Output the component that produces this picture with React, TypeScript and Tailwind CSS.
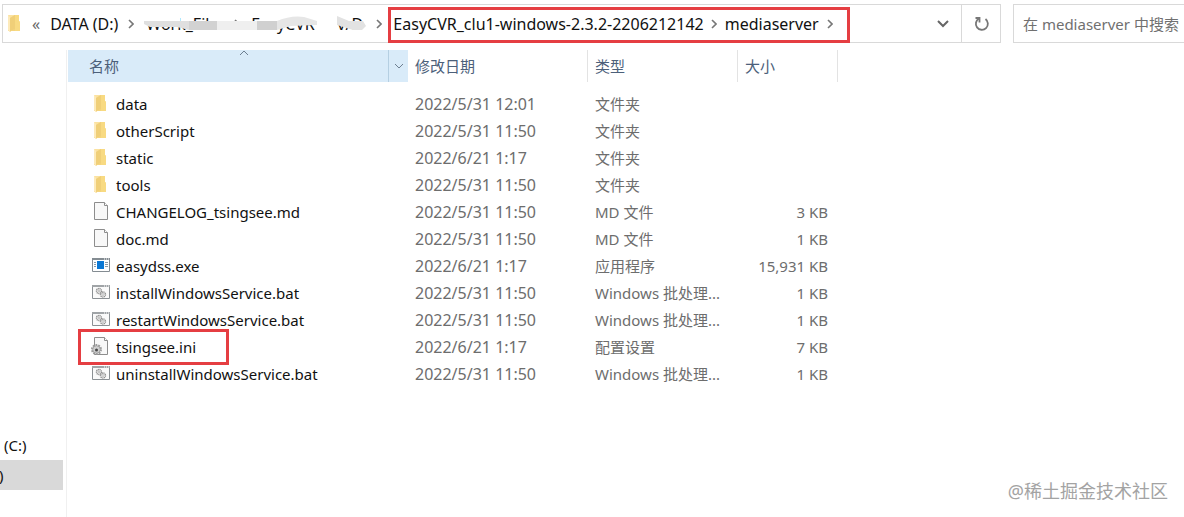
import { useState } from "react";

type FileKind = "folder" | "doc" | "exe" | "bat" | "ini";

interface FileEntry {
  name: string;
  kind: FileKind;
  modified: string;
  type: string;
  size?: string;
  marked?: boolean;
}

const files: FileEntry[] = [
  { name: "data", kind: "folder", modified: "2022/5/31 12:01", type: "文件夹" },
  { name: "otherScript", kind: "folder", modified: "2022/5/31 11:50", type: "文件夹" },
  { name: "static", kind: "folder", modified: "2022/6/21 1:17", type: "文件夹" },
  { name: "tools", kind: "folder", modified: "2022/5/31 11:50", type: "文件夹" },
  { name: "CHANGELOG_tsingsee.md", kind: "doc", modified: "2022/5/31 11:50", type: "MD 文件", size: "3 KB" },
  { name: "doc.md", kind: "doc", modified: "2022/5/31 11:50", type: "MD 文件", size: "1 KB" },
  { name: "easydss.exe", kind: "exe", modified: "2022/6/21 1:17", type: "应用程序", size: "15,931 KB" },
  { name: "installWindowsService.bat", kind: "bat", modified: "2022/5/31 11:50", type: "Windows 批处理...", size: "1 KB" },
  { name: "restartWindowsService.bat", kind: "bat", modified: "2022/5/31 11:50", type: "Windows 批处理...", size: "1 KB" },
  { name: "tsingsee.ini", kind: "ini", modified: "2022/6/21 1:17", type: "配置设置", size: "7 KB", marked: true },
  { name: "uninstallWindowsService.bat", kind: "bat", modified: "2022/5/31 11:50", type: "Windows 批处理...", size: "1 KB" },
];

function FolderIcon() {
  return (
    <svg width="20" height="20" viewBox="0 0 20 20" aria-hidden="true" className="shrink-0">
      <path d="M4 1h11v6l1 1v9H4z" fill="#f5d57c" />
      <path d="M4 1h6v14l-4 3-2-2z" fill="#fbe2a0" />
      <path d="M9 2l2-1v14l-5 2.500V4z" fill="#f0cf78" />
      <path d="M4 1l2 2v15l-2-2z" fill="#fdeaba" />
      <path d="M11 1h4v6l1 1v9h-5z" fill="#f8da82" />
    </svg>
  );
}

function DocIcon() {
  return (
    <svg width="20" height="20" viewBox="0 0 20 20" aria-hidden="true" className="shrink-0">
      <path d="M4.500 .5h10l3 3v14h-13z" fill="#f8f8f8" stroke="#8d8d8d" />
      <path d="M14.500 .5v3h3" fill="#fff" stroke="#8d8d8d" />
    </svg>
  );
}

function ExeIcon() {
  return (
    <svg width="20" height="20" viewBox="0 0 20 20" aria-hidden="true" className="shrink-0">
      <path d="M2.500 2.500h17v13h-17z" fill="#fff" stroke="#848c92" />
      <path d="M2 2h18v2H2z" fill="#848c92" />
      <path d="M14 3h1M16 3h1M18 3h1" stroke="#fff" />
      <path d="M7 5h7v8H7z" fill="#0b78d4" />
      <path d="M4 6.500h2M4 8.500h2M4 10.500h2M15 6.500h3M15 8.500h3M15 10.500h3" stroke="#8a9aa6" />
    </svg>
  );
}

function BatIcon() {
  return (
    <svg width="20" height="20" viewBox="0 0 20 20" aria-hidden="true" className="shrink-0">
      <path d="M2.500 2.500h17v13h-17z" fill="#fafafa" stroke="#8b9094" />
      <path d="M2 2h18v2H2z" fill="#a0a4a7" />
      <path d="M14 3h1M16 3h1M18 3h1" stroke="#fff" />
      <circle cx="9" cy="8" r="2.500" fill="none" stroke="#8f8f8f" strokeWidth="1.400" strokeDasharray="1.200 .5" />
      <circle cx="9" cy="8" r="1" fill="none" stroke="#999" strokeWidth=".6" />
      <circle cx="13" cy="11.500" r="2.500" fill="#fafafa" stroke="#8f8f8f" strokeWidth="1.400" strokeDasharray="1.200 .5" />
      <circle cx="13" cy="11.500" r="1" fill="none" stroke="#999" strokeWidth=".6" />
    </svg>
  );
}

function IniIcon() {
  return (
    <svg width="20" height="20" viewBox="0 0 20 20" aria-hidden="true" className="shrink-0">
      <path d="M4.500 .5h10l3 3v14h-13z" fill="#f8f8f8" stroke="#8d8d8d" />
      <path d="M14.500 .5v3h3" fill="#fff" stroke="#8d8d8d" />
      <circle cx="6.500" cy="12.500" r="4.500" fill="none" stroke="#9a9a9a" strokeWidth="2" strokeDasharray="1.800 1" />
      <circle cx="6.500" cy="12.500" r="3.800" fill="#cfcfcf" stroke="#969696" strokeWidth=".8" />
      <circle cx="6.500" cy="13" r="1.500" fill="#484848" />
    </svg>
  );
}

const icons: Record<FileKind, () => React.JSX.Element> = {
  folder: FolderIcon,
  doc: DocIcon,
  exe: ExeIcon,
  bat: BatIcon,
  ini: IniIcon,
};

function Chevron() {
  return (
    <svg width="6" height="10" viewBox="0 0 6 10" aria-hidden="true" className="shrink-0">
      <path d="M1 1l4 4-4 4" fill="none" stroke="#777" strokeWidth="1.600" />
    </svg>
  );
}

// the middle folders of the path are smudged out
function SmudgedPath() {
  return (
    <div className="relative ml-[10px] flex h-8 w-[232px] items-center whitespace-nowrap">
      <span className="w-[90px] pl-[2px]">Work_Files</span>
      <Chevron />
      <span className="w-[84px] pl-[11px]">EasyCVR</span>
      <Chevron />
      <span className="pl-[7px]">v/D</span>
      <svg className="absolute inset-0" width="232" height="32" viewBox="0 0 232 32" aria-hidden="true">
        <path d="M0 6h36v8H0zM74 6h14v18H74zM118 6h57v8h-57zM174 6h19v16h-19zM193 6h15v8h-15zM219 6h8v18h-8z" fill="#fff" />
        <path d="M0 13h45v9l-12-3H6l-6-3z" fill="#dfdfdf" />
        <path d="M45 13h28v9H45z" fill="#d2d2d2" />
        <path d="M73 13h40v9H73z" fill="#efefef" />
        <path d="M113 13h20v9h-20z" fill="#d0d0d0" />
        <path d="M133 13q14-6 27-4l13 4v4l-26 1-14 4z" fill="#e6e6e6" />
        <path d="M193 8l12 5h14l3 5-4 4h-9l-16-5z" fill="#e2e2e2" />
      </svg>
    </div>
  );
}

function AddressBar() {
  return (
    <nav
      aria-label="路径"
      className="flex h-[39px] min-w-0 flex-1 items-stretch border border-[#d9d9d9] bg-white text-base leading-5"
    >
      <div className="flex items-center pl-px">
        <FolderIcon />
        <span className="pl-2 text-[#666]">«</span>
        <button type="button" className="pr-[10px] pl-[10px] whitespace-nowrap">DATA (D:)</button>
        <Chevron />
        <SmudgedPath />
        <Chevron />
      </div>
      <div className="z-10 mt-[2px] -mb-px ml-[6px] flex items-center border-3 border-[#e53e42] pr-[14px] pb-[3px] pl-[2px] whitespace-nowrap">
        <button type="button" className="pr-[7px]">EasyCVR_clu1-windows-2.3.2-2206212142</button>
        <Chevron />
        <button type="button" className="px-[8px]">mediaserver</button>
        <Chevron />
      </div>
      <button type="button" aria-label="历史" className="ml-auto px-3">
        <svg width="12" height="8" viewBox="0 0 12 8" aria-hidden="true">
          <path d="M1 1l5 5 5-5" fill="none" stroke="#666" strokeWidth="2" />
        </svg>
      </button>
      <button type="button" aria-label="刷新" className="w-[39px] border-l border-[#d9d9d9] pl-3">
        <svg width="16" height="16" viewBox="0 0 16 16" aria-hidden="true">
          <path d="M11.500 3a6 6 0 1 1-6.500-.5" fill="none" stroke="#777" strokeWidth="1.800" />
          <path d="M1.500 2h4v4.500" fill="none" stroke="#777" strokeWidth="1.800" />
        </svg>
      </button>
    </nav>
  );
}

export default function App() {
  const [query, setQuery] = useState("");

  return (
    <div className="relative flex min-h-screen flex-col overflow-hidden bg-white font-['Noto_Sans','Noto_Sans_CJK_SC',sans-serif] text-[15px] leading-5 text-[#111]">
      <header className="flex gap-3 pt-1 pl-[2px]">
        <AddressBar />
        <input
          type="text"
          aria-label="搜索"
          value={query}
          onChange={(e) => setQuery(e.target.value)}
          placeholder="在 mediaserver 中搜索"
          className="h-[39px] w-[171px] shrink-0 border border-r-0 border-[#d9d9d9] pl-[9px] outline-none placeholder:text-[#707070]"
        />
      </header>

      <div className="flex flex-1 pt-[7px]">
        <aside className="flex w-[67px] shrink-0 flex-col justify-end border-r border-[#f0f0f0] pr-[3px] pb-[27px]">
          <button type="button" className="h-[30px] pl-1 text-left">(C:)</button>
          <button type="button" className="h-[30px] bg-[#d9d9d9] text-left">
            <span className="-ml-px">)</span>
          </button>
        </aside>

        <main className="pl-px">
          <table className="w-[770px] table-fixed border-separate border-spacing-0 text-left">
            <colgroup>
              <col className="w-[340px]" />
              <col className="w-[180px]" />
              <col className="w-[150px]" />
              <col className="w-[100px]" />
            </colgroup>
            <thead className="text-[#4c607a]">
              <tr className="h-8">
                <th className="relative bg-[#d9ebf9] p-0 font-normal">
                  <div className="flex h-8 items-center justify-between pl-[21px]">
                    名称
                    <button type="button" aria-label="筛选" className="flex h-8 w-5 items-center justify-center border-l border-[#b5cfe2]">
                      <svg width="10" height="6" viewBox="0 0 10 6" aria-hidden="true">
                        <path d="M1 1l4 4 4-4" fill="none" stroke="#6d7f91" />
                      </svg>
                    </button>
                  </div>
                  <svg className="absolute top-0 left-[171px]" width="10" height="6" viewBox="0 0 10 6" aria-hidden="true">
                    <path d="M1 5l4-4 4 4" fill="none" stroke="#6d7f91" />
                  </svg>
                </th>
                <th className="border-r border-[#e3e3e3] p-0 pl-[7px] font-normal">修改日期</th>
                <th className="border-r border-[#e3e3e3] p-0 pl-[7px] font-normal">类型</th>
                <th className="border-r border-[#e3e3e3] p-0 pl-[7px] font-normal">大小</th>
              </tr>
            </thead>
            <tbody className="text-[#6d6d6d] before:block before:h-2">
              {files.map((file) => {
                const Icon = icons[file.kind];

                return (
                  <tr key={file.name} className="h-[27px]">
                    <td className="relative p-0 pl-[22px] text-[#111]">
                      <div className="flex items-center gap-[6px]">
                        <Icon />
                        <span>{file.name}</span>
                      </div>
                      {file.marked ? (
                        <div className="absolute -top-1 left-[10px] h-[36px] w-[151px] border-3 border-[#e53e42]" />
                      ) : null}
                    </td>
                    <td className="p-0 pl-[7px] text-base leading-5">{file.modified}</td>
                    <td className="p-0 pl-[7px] whitespace-nowrap">{file.type}</td>
                    <td className="p-0 pr-[10px] text-right whitespace-nowrap">{file.size}</td>
                  </tr>
                );
              })}
            </tbody>
          </table>
        </main>
      </div>

      <p className="absolute right-4 bottom-3 text-lg text-[#a3a3a3]">@稀土掘金技术社区</p>
    </div>
  );
}
